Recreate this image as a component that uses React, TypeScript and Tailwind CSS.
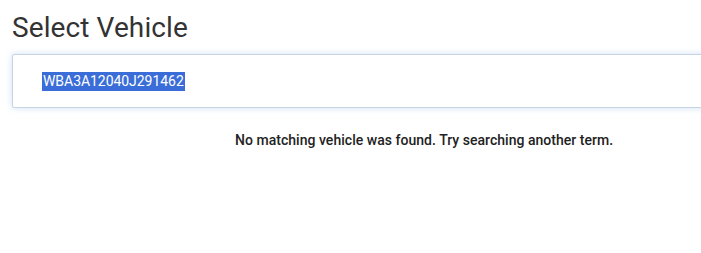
export default function App() {
  return (
    <div className="min-h-[253px] w-[701px] overflow-hidden bg-white font-['Roboto',sans-serif]">
      <h1 className="pl-3 pt-[11px] text-[28px] leading-[34px] font-normal text-[#333] tracking-[0.1px]">
        Select Vehicle
      </h1>
      <div className="ml-3 mt-[9px] h-[54px] w-[720px] rounded-[2px] border border-[#c6d4e3] bg-white shadow-[0_0_6px_rgba(120,170,220,0.35)] flex items-center pl-[29px]">
        <span className="bg-[#3a6dd8] px-[1px] text-[14px] leading-[19px] text-white tracking-[-0.05px]">
          WBA3A12040J291462
        </span>
      </div>
      <p className="pl-[235px] pt-[24px] text-[14px] leading-[16px] font-medium text-[#222] tracking-[0.03px]">
        No matching vehicle was found. Try searching another term.
      </p>
    </div>
  );
}
